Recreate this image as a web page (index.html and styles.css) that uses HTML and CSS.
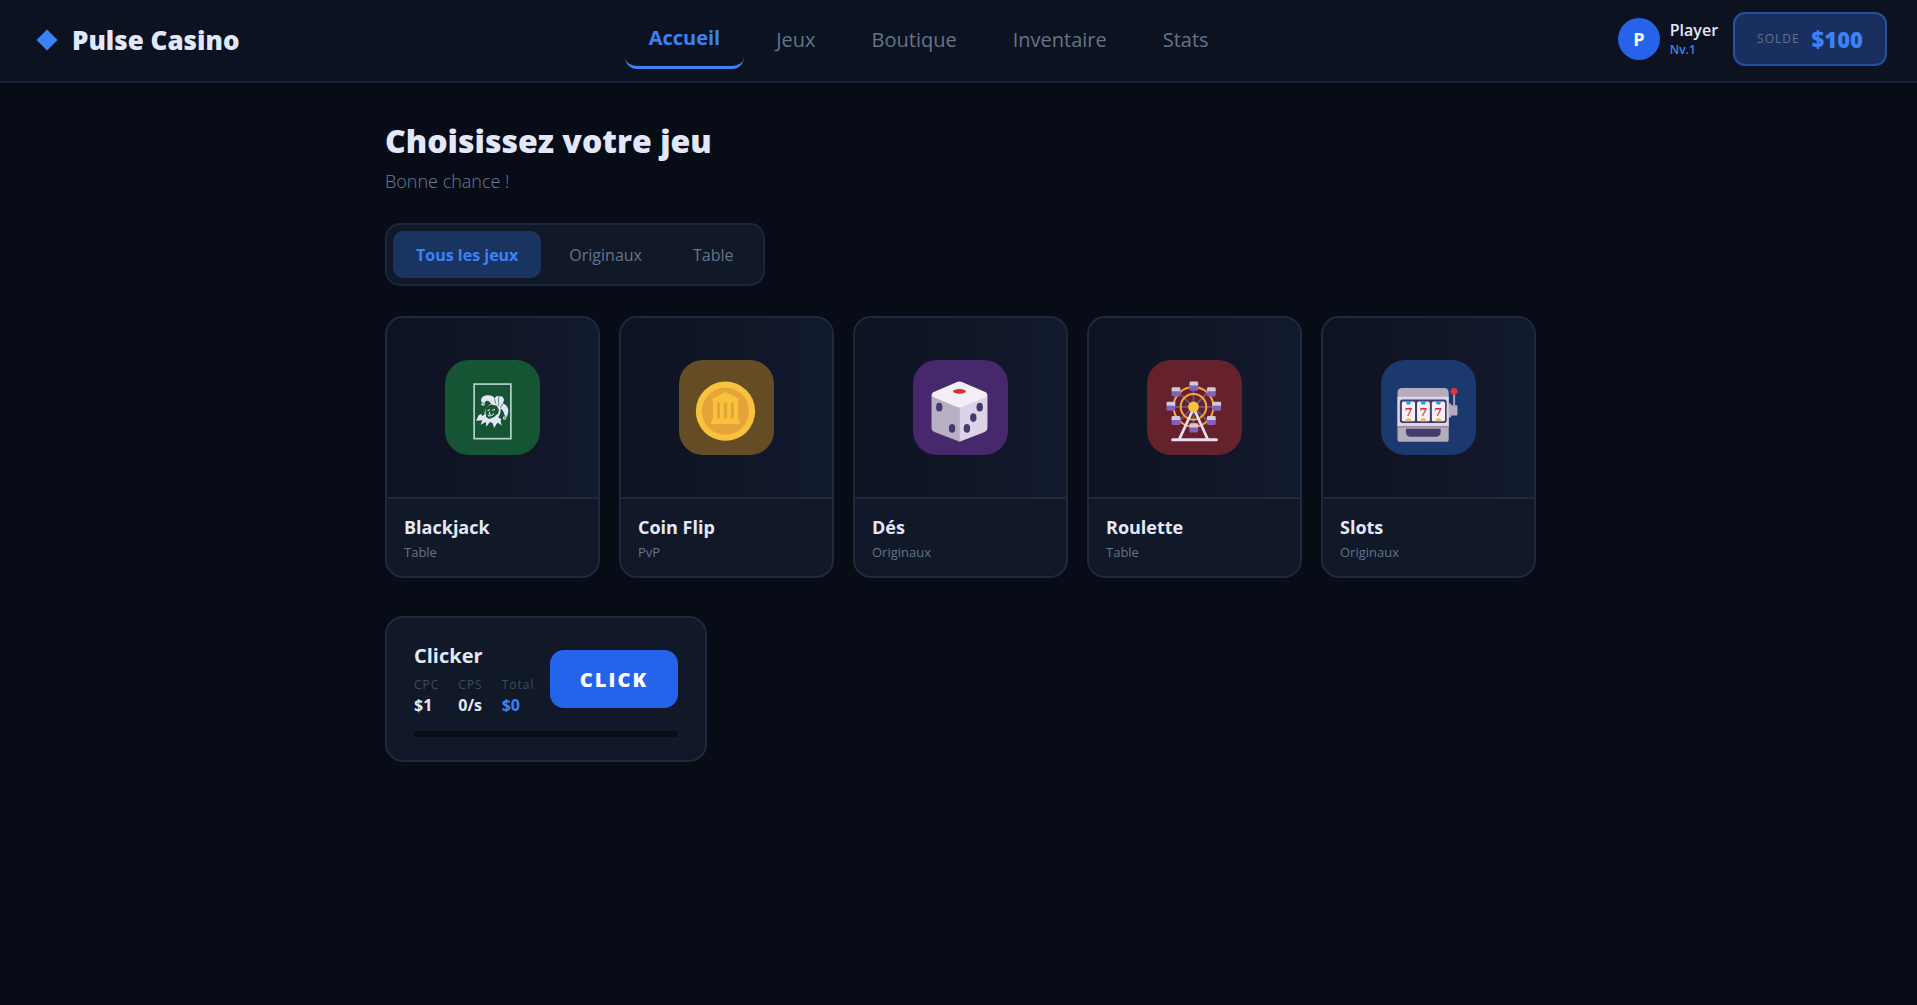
FILE: index.html
```html
<!DOCTYPE html>
<html lang="fr">
<head>
  <meta charset="UTF-8">
  <meta name="viewport" content="width=device-width, initial-scale=1">
  <title>Pulse Casino</title>
  <link rel="stylesheet" href="styles.css">
</head>
<body>

  <header class="navbar">
    <a class="brand" href="#">
      <svg class="brand-icon" viewBox="0 0 22 22" aria-hidden="true"><path d="M11 .5 21.5 11 11 21.500 .5 11z" fill="#3b82f6"/></svg>
      <span>Pulse Casino</span>
    </a>

    <nav class="nav-links">
      <a class="nav-link active" href="#">Accueil</a>
      <a class="nav-link" href="#">Jeux</a>
      <a class="nav-link" href="#">Boutique</a>
      <a class="nav-link" href="#">Inventaire</a>
      <a class="nav-link" href="#">Stats</a>
    </nav>

    <div class="user-area">
      <div class="avatar">P</div>
      <div class="user-info">
        <span class="user-name">Player</span>
        <span class="user-level">Nv.1</span>
      </div>
      <div class="balance">
        <span class="balance-label">SOLDE</span>
        <span class="balance-value">$100</span>
      </div>
    </div>
  </header>

  <main class="container">
    <h1>Choisissez votre jeu</h1>
    <p class="subtitle">Bonne chance !</p>

    <div class="tabs">
      <button type="button" class="tab active">Tous les jeux</button>
      <button type="button" class="tab">Originaux</button>
      <button type="button" class="tab">Table</button>
    </div>

    <div class="games-grid">
      <a class="game-card" href="#">
        <div class="game-cover">
          <!-- Joker -->
          <svg class="game-icon green" viewBox="225 180 282 282" aria-hidden="true">
            <rect x="311.500" y="251.500" width="109" height="162" fill="none" stroke="#b5d3cc" stroke-width="5"/>
            <g fill="#e2e8f9">
              <path d="M333 305C330 293 338 286 349 285C359 284 368 286 373 295C374 288 380 285 386 289C393 285 399 291 400 299L397 309C407 312 414 322 413 333L409 350L402 344C400 333 394 326 390 324C391 334 388 344 383 350L392 356L390 362L394 375L383 366L378 369L371 382L366 367L358 364L348 378L346 364L331 372L336 359L317 360L325 344L332 340L336 346L343 341L342 334L350 318L362 310L354 302L347 301L342 308Z"/>
              <circle cx="338" cy="311" r="5"/>
              <circle cx="402" cy="352" r="5"/>
            </g>
            <path d="M348 319L362 312L379 316L385 328L383 338L370 350L356 355L347 349L345 333Z" fill="#185532"/>
            <path d="M351 331L358 327M365 329L373 327M358 333L356 340L361 341M352 345C359 348 367 343 370 339" fill="none" stroke="#e2e8f9" stroke-width="3"/>
            <path d="M385 290C381 298 387 305 383 316M397 309L389 322M372 296L376 310" fill="none" stroke="#185532" stroke-width="2"/>
            <circle cx="338" cy="311" r="2" fill="#185532"/>
            <circle cx="402" cy="352" r="2" fill="#185532"/>
          </svg>
        </div>
        <div class="game-info">
          <h2>Blackjack</h2>
          <p>Table</p>
        </div>
      </a>

      <a class="game-card" href="#">
        <div class="game-cover">
          <!-- Pièce -->
          <svg class="game-icon gold" viewBox="42 45 282 282" aria-hidden="true">
            <circle cx="180" cy="197" r="88" fill="#f9c23c"/>
            <circle cx="180" cy="197" r="70" fill="#e5a43a"/>
            <path d="M141 160L176 142Q180 140 184 142L219 160V170H217V219H220L223 235H137L140 219H143V170H141ZM155 171V219H164V171ZM175 171V219H185V171ZM196 171V219H205V171Z" fill="#f9c23c" fill-rule="evenodd"/>
          </svg>
        </div>
        <div class="game-info">
          <h2>Coin Flip</h2>
          <p>PvP</p>
        </div>
      </a>

      <a class="game-card" href="#">
        <div class="game-cover">
          <!-- Dé -->
          <svg class="game-icon purple" viewBox="39 45 282 282" aria-hidden="true">
            <path d="M94 148L178 178V288L103 259Q94 255 94 246Z" fill="#b8b0c4"/>
            <path d="M260 148L177 178V288L252 259Q260 255 260 246Z" fill="#dcd3e8"/>
            <path d="M99 141L168 111Q177 107 186 111L255 141Q264 148 255 155L186 184Q177 188 168 184L99 155Q90 148 99 141Z" fill="#f2eff8"/>
            <ellipse cx="177" cy="138" rx="19" ry="7" fill="#dd2e2e"/>
            <g fill="#433b6b">
              <ellipse cx="117" cy="185" rx="9.500" ry="13"/>
              <ellipse cx="155" cy="248" rx="9.500" ry="13"/>
              <ellipse cx="237" cy="185" rx="9.500" ry="13"/>
              <ellipse cx="218" cy="216" rx="9.500" ry="13"/>
              <ellipse cx="199" cy="248" rx="9.500" ry="13"/>
            </g>
          </svg>
        </div>
        <div class="game-info">
          <h2>Dés</h2>
          <p>Originaux</p>
        </div>
      </a>

      <a class="game-card" href="#">
        <div class="game-cover">
          <!-- Grande roue -->
          <svg class="game-icon red" viewBox="39 45 282 282" aria-hidden="true">
            <path d="M177 125V245M117 184H237M133 141L220 228M220 141L133 228" stroke="#635994" stroke-width="5"/>
            <g fill="none" stroke="#f9a63a">
              <circle cx="177" cy="184" r="59" stroke-width="6"/>
              <circle cx="177" cy="184" r="38" stroke-width="6"/>
            </g>
            <path d="M173 198L135 280M182 198L219 280" stroke="#e8dcf0" stroke-width="8"/>
            <path d="M115 282H245" stroke="#e8dcf0" stroke-width="9" stroke-linecap="round"/>
            <circle cx="177" cy="184" r="16" fill="#f9c23c"/>
            <defs>
              <g id="cabin">
                <path d="M-13-2H13V10Q13 14 9 14H-9Q-13 14-13 10Z" fill="#8560c0"/>
                <path d="M-13-1V-9Q-13-13-9-13H9Q13-13 13-9V-1Z" fill="#d3c9d6"/>
              </g>
            </defs>
            <use href="#cabin" x="178" y="122"/>
            <use href="#cabin" x="125" y="139"/>
            <use href="#cabin" x="230" y="139"/>
            <use href="#cabin" x="110" y="182"/>
            <use href="#cabin" x="246" y="182"/>
            <use href="#cabin" x="125" y="224"/>
            <use href="#cabin" x="230" y="224"/>
            <use href="#cabin" x="178" y="246"/>
          </svg>
        </div>
        <div class="game-info">
          <h2>Roulette</h2>
          <p>Table</p>
        </div>
      </a>

      <a class="game-card" href="#">
        <div class="game-cover">
          <!-- Machine à sous -->
          <svg class="game-icon blue" viewBox="39 45 282 282" aria-hidden="true">
            <path d="M256 140V185" stroke="#a59cad" stroke-width="6"/>
            <circle cx="256" cy="138" r="10" fill="#ee3036"/>
            <path d="M239 174H247V179H262Q266 179 266 183V206Q266 210 262 210H247V216H239Z" fill="#b4acbc"/>
            <path d="M88 142Q88 128 102 128H226Q240 128 240 142V280Q240 288 232 288H96Q88 288 88 280Z" fill="#b4acbc"/>
            <path d="M88 154H240V241H88Z" fill="#dcd5e8"/>
            <path d="M88 241H240V246H88Z" fill="#998fa5"/>
            <rect x="95" y="162" width="139" height="70" rx="8" fill="#433b6b"/>
            <g fill="#f4f1f8">
              <rect x="101" y="168" width="39" height="59" rx="5"/>
              <rect x="146" y="168" width="38" height="59" rx="5"/>
              <rect x="190" y="168" width="39" height="59" rx="5"/>
            </g>
            <path d="M112 168H129L125 177H116ZM156 168H173L169 177H160ZM201 168H218L214 177H205Z" fill="#1ca0dc"/>
            <path d="M112 227Q112 218 120 218Q129 218 129 227ZM156 227Q156 218 164 218Q173 218 173 227ZM201 227Q201 218 209 218Q218 218 218 227Z" fill="#f3b942"/>
            <path d="M113 249H216V258Q216 273 201 273H128Q113 273 113 258Z" fill="#433b6b"/>
            <g class="reel-text">
              <text x="121" y="210">7</text>
              <text x="165" y="210">7</text>
              <text x="209" y="210">7</text>
            </g>
          </svg>
        </div>
        <div class="game-info">
          <h2>Slots</h2>
          <p>Originaux</p>
        </div>
      </a>
    </div>

    <section class="clicker">
      <div class="clicker-top">
        <div>
          <h2>Clicker</h2>
          <div class="clicker-stats">
            <div class="stat"><span>CPC</span><strong>$1</strong></div>
            <div class="stat"><span>CPS</span><strong>0/s</strong></div>
            <div class="stat total"><span>Total</span><strong>$0</strong></div>
          </div>
        </div>
        <button type="button" class="click-button">CLICK</button>
      </div>
      <div class="clicker-bar"></div>
    </section>
  </main>

</body>
</html>
```
FILE: styles.css
```css
* {
  box-sizing: border-box;
  margin: 0;
  padding: 0;
}

body {
  min-height: 100vh;
  background-color: #080c17;
  color: #e2e8f9;
  font-family: 'Segoe UI', 'Open Sans', 'Noto Sans', sans-serif;
}

a {
  color: inherit;
  text-decoration: none;
}

button {
  font-family: inherit;
  border: none;
  cursor: pointer;
}

/* Barre de navigation */
.navbar {
  display: flex;
  justify-content: space-between;
  align-items: center;
  padding: 10px 30px 12px;
  background-color: #0c121f;
  border-bottom: 2px solid #1a2338;
}

.brand {
  display: flex;
  align-items: center;
  gap: 14px;
  padding-left: 6px;
  font-size: 26px;
  font-weight: 800;
}

.brand-icon {
  width: 22px;
  height: 22px;
}

.nav-links {
  display: flex;
  align-items: center;
  gap: 8px;
}

.nav-link {
  padding: 14px 24px;
  border-radius: 12px;
  color: #64748b;
  font-size: 20px;
  font-weight: 500;
  line-height: 28px;
}

.nav-link.active {
  border-bottom: 3px solid #3b82f6;
  color: #3b82f6;
  font-weight: 700;
}

.user-area {
  display: flex;
  align-items: center;
  padding-bottom: 2px;
}

.avatar {
  width: 42px;
  height: 42px;
  border-radius: 50%;
  background-color: #2563eb;
  color: #fff;
  font-size: 18px;
  font-weight: 700;
  line-height: 42px;
  text-align: center;
}

.user-info {
  display: flex;
  flex-direction: column;
  margin: 0 15px 0 10px;
}

.user-name {
  font-size: 16px;
  font-weight: 600;
  line-height: 22px;
}

.user-level {
  color: #3b82f6;
  font-size: 12px;
  font-weight: 600;
  line-height: 18px;
}

.balance {
  display: flex;
  align-items: center;
  gap: 12px;
  height: 54px;
  padding: 0 22px;
  background-color: #182f5f;
  border: 2px solid #25509c;
  border-radius: 12px;
}

.balance-label {
  color: #64748b;
  font-size: 12px;
  font-weight: 500;
  letter-spacing: 1px;
}

.balance-value {
  color: #3b82f6;
  font-size: 22px;
  font-weight: 800;
}

/* Contenu */
.container {
  width: 100%;
  max-width: 1155px;
  margin: 0 auto;
  padding: 36px 0 40px 4px;
}

h1 {
  font-size: 32px;
  font-weight: 800;
  line-height: 44px;
}

.subtitle {
  margin-top: 4px;
  color: #6c7b93;
  font-size: 18px;
  font-weight: 300;
  line-height: 28px;
}

.tabs {
  display: inline-flex;
  gap: 5px;
  margin-top: 28px;
  padding: 6px;
  background-color: #111827;
  border: 2px solid #1a2540;
  border-radius: 15px;
}

.tab {
  padding: 1px 23px 0;
  border-radius: 10px;
  background-color: transparent;
  color: #64748b;
  font-size: 16px;
  font-weight: 500;
  line-height: 46px;
}

.tab.active {
  background-color: #1a3462;
  color: #3b82f6;
  font-weight: 700;
}

.games-grid {
  display: grid;
  grid-template-columns: repeat(5, 1fr);
  gap: 19px;
  margin-top: 30px;
}

.game-card {
  overflow: hidden;
  background-color: #111827;
  border: 2px solid #1e293b;
  border-radius: 18px;
}

.game-cover {
  display: flex;
  justify-content: center;
  align-items: center;
  height: 181px;
  background: linear-gradient(90deg, #0d1320, #111628 60%, #111b2e);
  border-bottom: 2px solid #1e293b;
}

.game-icon {
  width: 95px;
  height: 95px;
  border-radius: 24px;
}

.green { background-color: #165533; }
.gold { background-color: #644c25; }
.purple { background-color: #48286c; }
.red { background-color: #66222c; }
.blue { background-color: #1b396f; }

.reel-text {
  fill: #dc2f30;
  font-family: 'DejaVu Serif', serif;
  font-size: 34px;
  font-weight: 700;
  text-anchor: middle;
}

.game-info {
  padding: 15px 17px 14px;
}

.game-info h2 {
  font-size: 18px;
  font-weight: 700;
  line-height: 26px;
}

.game-info p {
  margin-top: 2px;
  color: #64748b;
  font-size: 13px;
  line-height: 20px;
}

/* Clicker */
.clicker {
  width: 322px;
  margin-top: 38px;
  padding: 24px 27px 23px;
  background-color: #111827;
  border: 2px solid #1e293b;
  border-radius: 18px;
}

.clicker-top {
  display: flex;
  justify-content: space-between;
  align-items: center;
}

.clicker h2 {
  font-size: 20px;
  font-weight: 700;
  line-height: 28px;
}

.clicker-stats {
  display: flex;
  gap: 19px;
  margin-top: 6px;
}

.stat span,
.stat strong {
  display: block;
}

.stat span {
  color: #3f4b60;
  font-size: 12px;
  font-weight: 500;
  letter-spacing: 1px;
  line-height: 18px;
}

.stat strong {
  font-size: 16px;
  font-weight: 700;
  line-height: 22px;
}

.total strong {
  color: #3b82f6;
}

.click-button {
  width: 128px;
  height: 58px;
  border-radius: 14px;
  background-color: #2563eb;
  color: #fff;
  font-size: 20px;
  font-weight: 800;
  letter-spacing: 2px;
}

.clicker-bar {
  height: 6px;
  margin-top: 15px;
  border-radius: 3px;
  background-color: #080c14;
}
```
